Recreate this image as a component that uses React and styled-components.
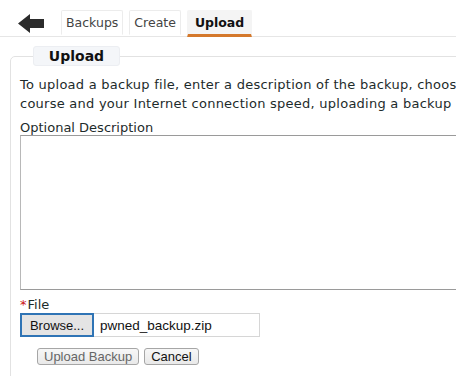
import styled, { createGlobalStyle } from "styled-components";

const Global = createGlobalStyle`
    html, body {
        margin: 0;
        padding: 0;
        background: #fff;
        overflow: hidden;
    }
    body {
        font-family: "DejaVu Sans", Verdana, sans-serif;
        color: #1d2b2b;
    }
`;

const Page = styled.div`
    width: 456px;
    height: 376px;
    overflow: hidden;
`;

const TopBar = styled.div`
    display: flex;
    align-items: flex-end;
    height: 36px;
    border-bottom: 1px solid #e6e6e6;
    padding-left: 18px;
`;

const Back = styled.div`
    display: flex;
    align-items: center;
    margin: 0 17px 3px 0;
`;

const Tabs = styled.div`
    display: flex;
    gap: 6px;
`;

const Tab = styled.div`
    height: 23px;
    display: flex;
    align-items: center;
    font-size: 12.5px;
    color: ${(p) => (p.$active ? "#111" : "#444")};
    font-weight: ${(p) => (p.$active ? 700 : 400)};
    background: ${(p) => (p.$active ? "#f4f4f4" : "#fff")};
    border: 1px solid ${(p) => (p.$active ? "#f4f4f4" : "#ececec")};
    border-bottom: ${(p) => (p.$active ? "3px solid #d4782b" : "1px solid #fff")};
    border-radius: 2px 2px 0 0;
    margin-bottom: -1px;
    padding: 0 ${(p) => (p.$active ? "7px" : "4px")};
`;

const Body = styled.div`
    padding: 9px 0 0 10px;
`;

const Fieldset = styled.fieldset`
    width: 700px;
    margin: 0;
    padding: 9px 9px 20px 9px;
    border: 1px solid #e2e2e2;
    border-radius: 5px;
    min-height: 330px;
`;

const Legend = styled.legend`
    margin-left: 13px;
    padding: 0;
`;

const LegendBox = styled.span`
    display: block;
    width: 87px;
    height: 20px;
    line-height: 19px;
    box-sizing: border-box;
    background: #f4f6f9;
    border: 1px solid #eceef2;
    border-radius: 3px;
    font-size: 14px;
    font-weight: 700;
    color: #111;
    text-align: center;
`;

const Intro = styled.p`
    margin: 0;
    font-size: 13px;
    line-height: 19px;
    letter-spacing: 0.25px;
    white-space: nowrap;
`;

const Label = styled.label`
    display: block;
    font-size: 13px;
    line-height: 15px;
    margin-top: ${(p) => p.$gap || 7}px;
`;

const Required = styled.span`
    color: #cc1111;
    margin-right: 1px;
`;

const TextArea = styled.textarea`
    display: block;
    box-sizing: border-box;
    width: 600px;
    height: 155px;
    margin: 0;
    border: 1px solid #9a9a9a;
    border-left-color: #b8b8b8;
    resize: none;
    font-family: inherit;
`;

const FileRow = styled.div`
    display: flex;
    align-items: center;
    box-sizing: border-box;
    width: 240px;
    height: 24px;
    margin-top: 1px;
    border: 1px solid #d6d6d6;
`;

const Browse = styled.button`
    box-sizing: border-box;
    height: 24px;
    width: 74px;
    margin: 0 0 0 -1px;
    padding: 0;
    background: #e4e4e4;
    border: 2px solid #2f74b5;
    font-family: "Liberation Sans", Arial, sans-serif;
    font-size: 13px;
    color: #111;
`;

const FileName = styled.span`
    margin-left: 6px;
    font-family: "Liberation Sans", Arial, sans-serif;
    font-size: 13.5px;
    color: #111;
`;

const Actions = styled.div`
    display: flex;
    gap: 5px;
    margin: 11px 0 0 17px;
`;

const Button = styled.button`
    box-sizing: border-box;
    height: 17px;
    padding: 0 6px;
    background: linear-gradient(#f7f7f7, #e9e9e9);
    border: 1px solid #a6a6a6;
    border-radius: 3px;
    font-family: "Liberation Sans", Arial, sans-serif;
    font-size: 13px;
    line-height: 15px;
    color: ${(p) => (p.$muted ? "#666" : "#111")};
`;

function App() {
    return (
        <Page>
            <Global />
            <TopBar>
                <Back>
                    <svg width="26" height="19" viewBox="0 0 26 19">
                        <path d="M0 9.5 L12 0 L12 5 L26 5 L26 14 L12 14 L12 19 Z" fill="#2b2b2b" />
                    </svg>
                </Back>
                <Tabs>
                    <Tab>Backups</Tab>
                    <Tab>Create</Tab>
                    <Tab $active>Upload</Tab>
                </Tabs>
            </TopBar>
            <Body>
                <Fieldset>
                    <Legend>
                        <LegendBox>Upload</LegendBox>
                    </Legend>
                    <Intro>
                        To upload a backup file, enter a description of the backup, choose the file, and click Upload Backup. Depending on the size of the
                        <br />
                        course and your Internet connection speed, uploading a backup may take some time.
                    </Intro>
                    <Label $gap={7}>Optional Description</Label>
                    <TextArea />
                    <Label>
                        <Required>*</Required>File
                    </Label>
                    <FileRow>
                        <Browse>Browse...</Browse>
                        <FileName>pwned_backup.zip</FileName>
                    </FileRow>
                    <Actions>
                        <Button $muted>Upload Backup</Button>
                        <Button>Cancel</Button>
                    </Actions>
                </Fieldset>
            </Body>
        </Page>
    );
}

export default App;
